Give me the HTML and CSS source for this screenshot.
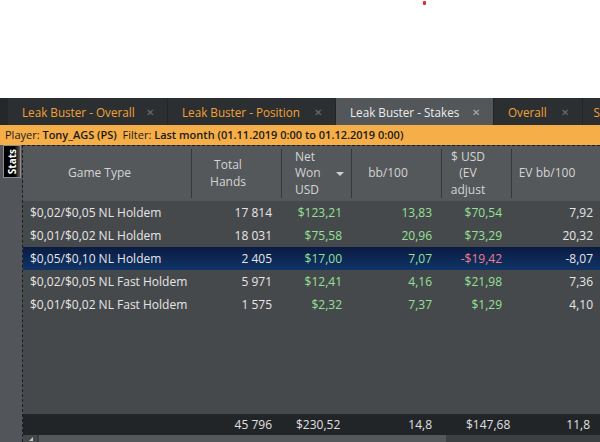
FILE: index.html
```html
<!DOCTYPE html>
<html>
<head>
<meta charset="utf-8">
<link rel="stylesheet" href="styles.css">
</head>
<body>
<div class="top"><span class="dot"></span></div>
<div class="tabs">
  <div class="tab-lead"></div>
  <div class="tab w1"><span class="tl">Leak Buster - Overall</span><span class="x">✕</span></div>
  <div class="tab w2"><span class="tl">Leak Buster - Position</span><span class="x">✕</span></div>
  <div class="tab w3 active"><span class="tl">Leak Buster - Stakes</span><span class="x">✕</span></div>
  <div class="tab w4"><span class="tl">Overall</span><span class="x">✕</span></div>
  <div class="tab w5"><span class="tl">S</span></div>
</div>
<div class="filter"><span>Player: <b>Tony_AGS (PS)</b>&nbsp; Filter: <b>Last month (01.11.2019 0:00 to 01.12.2019 0:00)</b></span></div>
<div class="main">
  <div class="side"><div class="stats"><span>Stats</span></div></div>
  <div class="grid">
    <div class="row head">
      <div class="hc">Game Type</div>
      <div class="hc">Total<br>Hands</div>
      <div class="hc sort">Net<br>Won<br>USD<span class="arrow"></span></div>
      <div class="hc">bb/100</div>
      <div class="hc">$ USD<br>(EV<br>adjust</div>
      <div class="hc">EV bb/100</div>
    </div>
    <div class="body">
      <div class="row data">
        <div class="c first">$0,02/$0,05 NL Holdem</div><div class="c">17 814</div><div class="c g">$123,21</div><div class="c g">13,83</div><div class="c g">$70,54</div><div class="c last">7,92</div>
      </div>
      <div class="row data">
        <div class="c first">$0,01/$0,02 NL Holdem</div><div class="c">18 031</div><div class="c g">$75,58</div><div class="c g">20,96</div><div class="c g">$73,29</div><div class="c last">20,32</div>
      </div>
      <div class="row data sel">
        <div class="c first">$0,05/$0,10 NL Holdem</div><div class="c">2 405</div><div class="c g">$17,00</div><div class="c g">7,07</div><div class="c r">-$19,42</div><div class="c last">-8,07</div>
      </div>
      <div class="row data">
        <div class="c first">$0,02/$0,05 NL Fast Holdem</div><div class="c">5 971</div><div class="c g">$12,41</div><div class="c g">4,16</div><div class="c g">$21,98</div><div class="c last">7,36</div>
      </div>
      <div class="row data">
        <div class="c first">$0,01/$0,02 NL Fast Holdem</div><div class="c">1 575</div><div class="c g">$2,32</div><div class="c g">7,37</div><div class="c g">$1,29</div><div class="c last">4,10</div>
      </div>
    </div>
    <div class="row foot">
      <div class="c first"></div><div class="c">45 796</div><div class="c fl">$230,52</div><div class="c">14,8</div><div class="c fl">$147,68</div><div class="c flast">11,8</div>
    </div>
    <div class="hscroll"><div class="sbtn"><span class="tri"></span></div><div class="thumb"></div></div>
  </div>
</div>
</body>
</html>
```
FILE: styles.css
```css
* { box-sizing: border-box; }
html, body { margin: 0; padding: 0; }
body {
  width: 600px; height: 442px; overflow: hidden; background: #fff;
  font-family: "Open Sans", "Noto Sans", sans-serif; font-size: 12px;
}
.top { height: 98px; position: relative; }
.dot { position: absolute; left: 423px; top: 1px; width: 3px; height: 4px; background: #e82a2a; border-radius: 1px; }

.tabs { height: 27px; display: flex; background: #2a2d30; font-size: 11.7px; }
.tab-lead { width: 8px; background: #25282b; }
.tab {
  display: flex; align-items: center; justify-content: space-between;
  padding: 0 13px 0 14px; color: #f2a232; background: #2c2f32;
  border-right: 1px solid #222427; white-space: nowrap; overflow: hidden;
}
.tab.active { background: #53575a; color: #ececec; }
.tab.active .x { color: #b0b0b0; }
.w1 { width: 160px; }
.w2 { width: 168px; }
.w3 { width: 158px; }
.w4 { width: 89px; }
.w5 { flex: 1; padding-right: 0; justify-content: flex-end; padding-left: 0; border: 0; }
.x { color: #6e7174; font-size: 10px; }

.filter {
  height: 20px; background: #f5ae48; color: #1a1a1a; font-size: 11px;
  line-height: 20px; padding-left: 5px; white-space: nowrap; overflow: hidden;
}
.filter b { font-weight: 600; }

.main { display: flex; height: 297px; background: #52565a; }
.side { width: 22px; padding: 0 0 0 3px; }
.stats {
  width: 18px; height: 33px; border: 1px solid #8e8e8e;
  background: linear-gradient(to right, #000 65%, #5a5a5a);
  display: flex; align-items: center; justify-content: center;
}
.stats span {
  writing-mode: vertical-rl; transform: rotate(180deg);
  color: #fff; font-size: 10px; font-weight: 700; line-height: 1;
}
.grid {
  flex: 1; display: flex; flex-direction: column;
  border-left: 1px dashed #1c1c1c; border-top: 1px dashed #1c1c1c;
}
.row { display: grid; grid-template-columns: 169px 90px 70px 90px 70px 1fr; }
.head { height: 55px; background: #54585b; color: #d4d4d4; line-height: 16.5px; }
.hc {
  position: relative; display: flex; align-items: center; justify-content: center;
  text-align: center; padding-right: 18px;
}
.hc::after {
  content: ""; position: absolute; right: 0; top: 3px; bottom: 3px;
  width: 1px; background: #35383b;
}
.hc:first-child { justify-content: flex-start; padding-right: 0; padding-left: 45px; }
.hc:last-child::after { display: none; }
.hc.sort { justify-content: flex-start; padding-left: 13px; text-align: left; }
.arrow {
  position: absolute; right: 8px; top: 26px; width: 0; height: 0;
  border-left: 4px solid transparent; border-right: 4px solid transparent;
  border-top: 4px solid #d0d0d0;
}
.body { flex: 1; background: #46494c; }
.data { height: 23px; color: #e6e6e6; }
.c { display: flex; align-items: center; justify-content: flex-end; padding-right: 10px; white-space: nowrap; }
.c.first { justify-content: flex-start; padding-left: 7px; padding-right: 0; }
.c.last { padding-right: 7px; }
.g { color: #95e195; }
.r { color: #ef7f88; }
.sel { background: linear-gradient(#0a1b42, #103467); }
.foot { height: 21px; background: #222528; color: #e0e0e0; }
.foot .fl { justify-content: flex-start; padding-left: 14px; }
.foot .c:nth-child(5) { padding-left: 24px; }
.foot .flast { padding-right: 10px; }
.hscroll { height: 7px; display: flex; background: #3d4043; }
.sbtn { width: 16px; background: #46494c; position: relative; border-right: 2px solid #3a3d40; }
.tri {
  position: absolute; left: 6px; top: 2px; width: 0; height: 0;
  border-left: 4px solid transparent; border-bottom: 4px solid #c8c8c8;
}
.thumb { width: 407px; background: #54585b; }
```
